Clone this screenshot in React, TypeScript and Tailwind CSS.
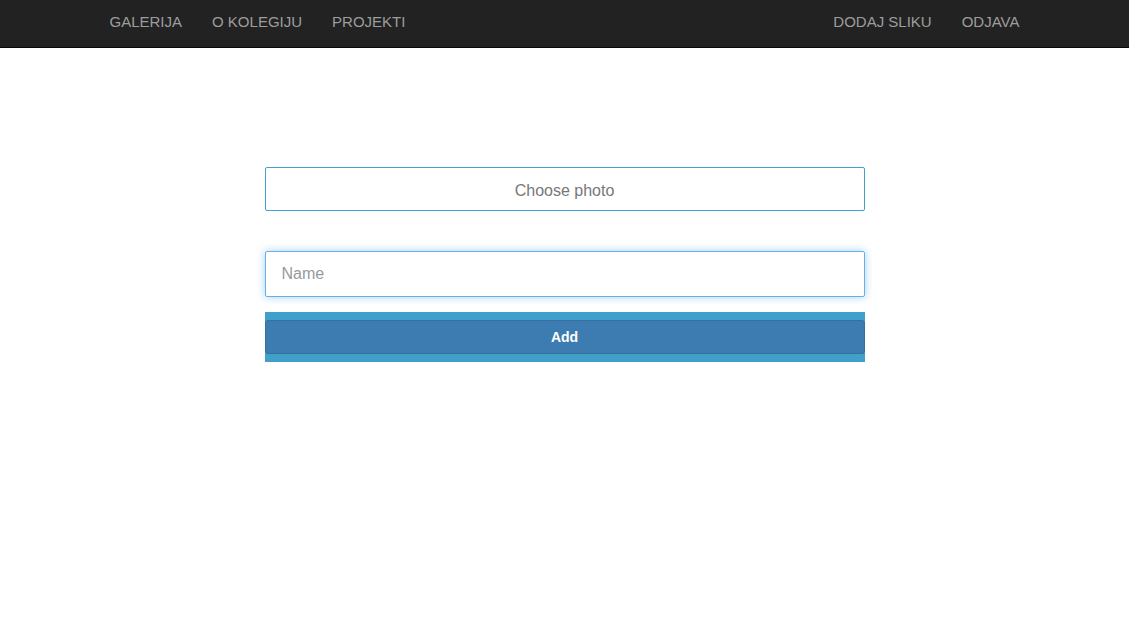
import { useState } from "react";

export default function App() {
    const [name, setName] = useState("");

    const leftLinks = ["Galerija", "O kolegiju", "Projekti"];
    const rightLinks = ["Dodaj sliku", "Odjava"];

    return (
        <div className="min-h-screen bg-white font-['Liberation_Sans',Arial,sans-serif]">
            <nav className="h-[48px] bg-[#222222] border-b border-[#080808]">
                <div className="w-[970px] mx-auto px-[15px] flex justify-between h-full">
                    <ul className="flex">
                        {leftLinks.map((link) => (
                            <li key={link}>
                                <a href="#" className="block px-[15px] leading-[43px] text-[15px] uppercase text-[#9d9d9d]">
                                    {link}
                                </a>
                            </li>
                        ))}
                    </ul>
                    <ul className="flex">
                        {rightLinks.map((link) => (
                            <li key={link}>
                                <a href="#" className="block px-[15px] leading-[43px] text-[15px] uppercase text-[#9d9d9d]">
                                    {link}
                                </a>
                            </li>
                        ))}
                    </ul>
                </div>
            </nav>

            <form className="w-[600px] mx-auto mt-[119px] flex flex-col" onSubmit={(e) => e.preventDefault()}>
                <label className="h-[44px] pt-[3px] flex items-center justify-center border border-[#3fa1cf] rounded-[2px] text-[16px] text-[#777777] cursor-pointer">
                    Choose photo
                    <input type="file" className="hidden" />
                </label>

                <input
                    type="text"
                    value={name}
                    onChange={(e) => setName(e.target.value)}
                    placeholder="Name"
                    className="mt-[40px] h-[46px] px-[16px] border border-[#66afe9] rounded-[2px] text-[16px] text-[#555] placeholder:text-[#999999] shadow-[0_0_8px_rgba(102,175,233,0.6)] outline-none"
                />

                <div className="mt-[15px] h-[50px] bg-[#3fa1ca] flex items-center">
                    <button
                        type="submit"
                        className="w-full h-[34px] bg-[#3d7cb1] border border-[#3670a2] rounded-[3px] text-white text-[14px] font-bold"
                    >
                        Add
                    </button>
                </div>
            </form>
        </div>
    );
}
